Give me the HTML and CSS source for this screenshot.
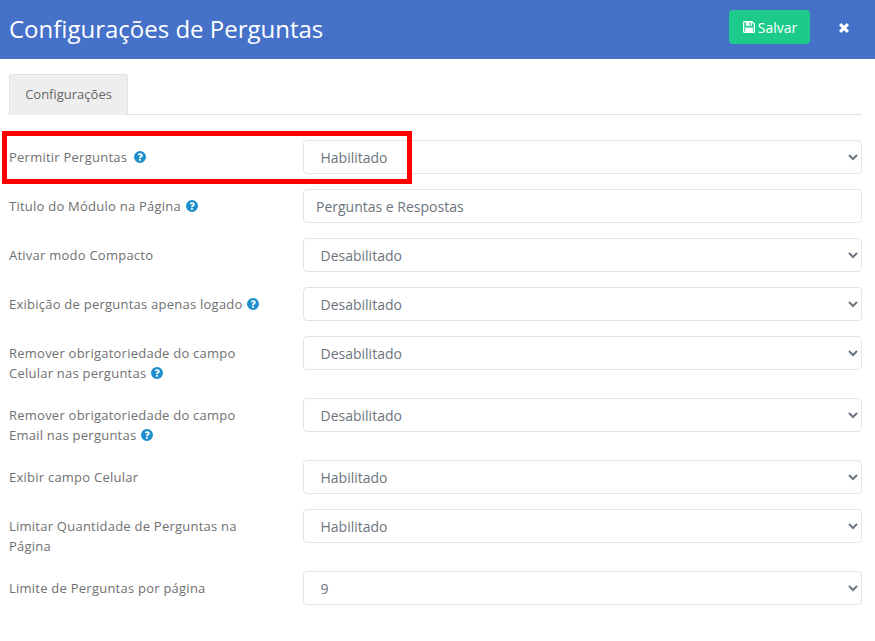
FILE: index.html
```html
<!DOCTYPE html>
<html lang="pt-BR">
<head>
<meta charset="utf-8">
<title>Configurações de Perguntas</title>
<link rel="stylesheet" href="styles.css">
</head>
<body>
<svg class="defs" width="0" height="0" aria-hidden="true">
  <symbol id="help" viewBox="0 0 24 24">
    <path fill-rule="evenodd" d="M12 0a12 12 0 1 0 0 24a12 12 0 0 0 0-24zM12.3 4.6c3 0 5.2 1.8 5.2 4.3c0 1.9-1.1 2.8-2.3 3.6c-1 .6-1.5 1-1.5 1.8v.4h-3.6v-.8c0-1.800 1-2.800 2.100-3.500c.9-.6 1.500-.9 1.500-1.600c0-.8-.7-1.200-1.500-1.200c-1 0-1.700.5-2.400 1.400L7.400 6.900c1.100-1.500 2.700-2.300 4.900-2.300zM10.100 16h3.600v3.400h-3.600z"/>
  </symbol>
</svg>
<header class="topbar">
  <h1 class="title">Configurações de Perguntas</h1>
  <div class="actions">
    <button class="save" type="button">
      <svg class="save-icon" viewBox="0 0 14 14" aria-hidden="true"><path fill-rule="evenodd" d="M1.500 1H10.300L13 3.700V11.500C13 12.300 12.300 13 11.500 13H2.500C1.700 13 1 12.300 1 11.500V2.500C1 1.700 1.700 1 2.500 1ZM2.300 2.300V11.700H11.700V4.300L9.900 2.500V5.800H3.900V2.300ZM7.500 2.600V4.900H8.800V2.600ZM3.200 7.500H10.800V11.700H3.200Z"/></svg>
      Salvar
    </button>
    <svg class="close" viewBox="0 0 12 12" aria-label="Fechar"><path d="M3.200 1L6 3.800L8.800 1L11 3.200L8.200 6L11 8.800L8.800 11L6 8.200L3.200 11L1 8.800L3.800 6L1 3.200Z"/></svg>
  </div>
</header>
<main class="content">
  <nav class="tabs"><span class="tab">Configurações</span></nav>
  <form class="form">
    <div class="row">
      <label class="label">Permitir Perguntas <svg class="help help-wide"><use href="#help"/></svg></label>
      <select class="control"><option>Habilitado</option></select>
    </div>
    <div class="row">
      <label class="label">Titulo do Módulo na Página <svg class="help"><use href="#help"/></svg></label>
      <input class="control text" type="text" value="Perguntas e Respostas">
    </div>
    <div class="row">
      <label class="label">Ativar modo Compacto</label>
      <select class="control"><option>Desabilitado</option></select>
    </div>
    <div class="row">
      <label class="label">Exibição de perguntas apenas logado <svg class="help"><use href="#help"/></svg></label>
      <select class="control"><option>Desabilitado</option></select>
    </div>
    <div class="row tall">
      <label class="label">Remover obrigatoriedade do campo<br>Celular nas perguntas <svg class="help"><use href="#help"/></svg></label>
      <select class="control"><option>Desabilitado</option></select>
    </div>
    <div class="row tall">
      <label class="label">Remover obrigatoriedade do campo<br>Email nas perguntas <svg class="help"><use href="#help"/></svg></label>
      <select class="control"><option>Desabilitado</option></select>
    </div>
    <div class="row">
      <label class="label">Exibir campo Celular</label>
      <select class="control"><option>Habilitado</option></select>
    </div>
    <div class="row tall">
      <label class="label">Limitar Quantidade de Perguntas na<br>Página</label>
      <select class="control"><option>Habilitado</option></select>
    </div>
    <div class="row">
      <label class="label">Limite de Perguntas por página</label>
      <select class="control"><option>9</option></select>
    </div>
  </form>
</main>
<div class="highlight" aria-hidden="true"></div>
</body>
</html>
```
FILE: styles.css
```css
* { box-sizing: border-box; }
html, body { margin: 0; padding: 0; }
body {
  width: 875px;
  height: 641px;
  overflow: hidden;
  background: #fff;
  font-family: "Open Sans", sans-serif;
  color: #6c757d;
  position: relative;
}
.defs { position: absolute; }
.topbar {
  height: 59px;
  background: #4571c9;
  display: flex;
  align-items: center;
  justify-content: space-between;
  padding: 0 25px 0 9px;
}
.title {
  margin: -3px 0 0;
  font-size: 24px;
  font-weight: 400;
  color: #fff;
}
.actions { display: flex; align-items: center; gap: 28px; }
.save {
  width: 81px;
  height: 34px;
  margin-top: -5px;
  border: 0;
  border-radius: 4px;
  background: #1ccb8c;
  color: #fff;
  font: 400 14px "Open Sans", sans-serif;
  display: flex;
  align-items: center;
  justify-content: center;
  gap: 2px;
  padding: 0;
}
.save-icon { width: 14px; height: 14px; fill: #fff; }
.close { width: 12px; height: 12px; fill: #fff; margin-top: -4px; }
.content { padding: 15px 13px 0 9px; }
.tabs {
  height: 41px;
  border-bottom: 1px solid #dee2e6;
  display: flex;
}
.tab {
  width: 119px;
  height: 41px;
  background: #eee;
  border: 1px solid #dee2e6;
  border-bottom: 0;
  border-radius: 3px 3px 0 0;
  font-size: 13px;
  line-height: 39px;
  text-align: center;
  color: #666;
}
.form {
  margin-top: 25px;
  display: flex;
  flex-direction: column;
  gap: 15px;
}
.row {
  display: grid;
  grid-template-columns: 294px 559px;
  min-height: 34px;
}
.row.tall { min-height: 47px; }
.label {
  font-size: 13px;
  line-height: 20px;
  letter-spacing: .24px;
  color: #707070;
  padding-top: 7px;
}
.control {
  height: 34px;
  width: 559px;
  border: 1px solid #e2e5e8;
  border-radius: 4px;
  background-color: #fff;
  padding: 0 12px;
  font-family: "Open Sans", sans-serif;
  font-size: 14px;
  color: #6c757d;
}
select.control { padding-left: 12.5px; }
.help {
  width: 12px;
  height: 12px;
  fill: #1f8ecd;
  vertical-align: -1px;
  margin-left: 1px;
}
.help-wide { margin-left: 3.500px; }
.highlight {
  position: absolute;
  left: 2px;
  top: 131px;
  width: 410px;
  height: 53px;
  border: 5px solid #f00;
  pointer-events: none;
}
```
